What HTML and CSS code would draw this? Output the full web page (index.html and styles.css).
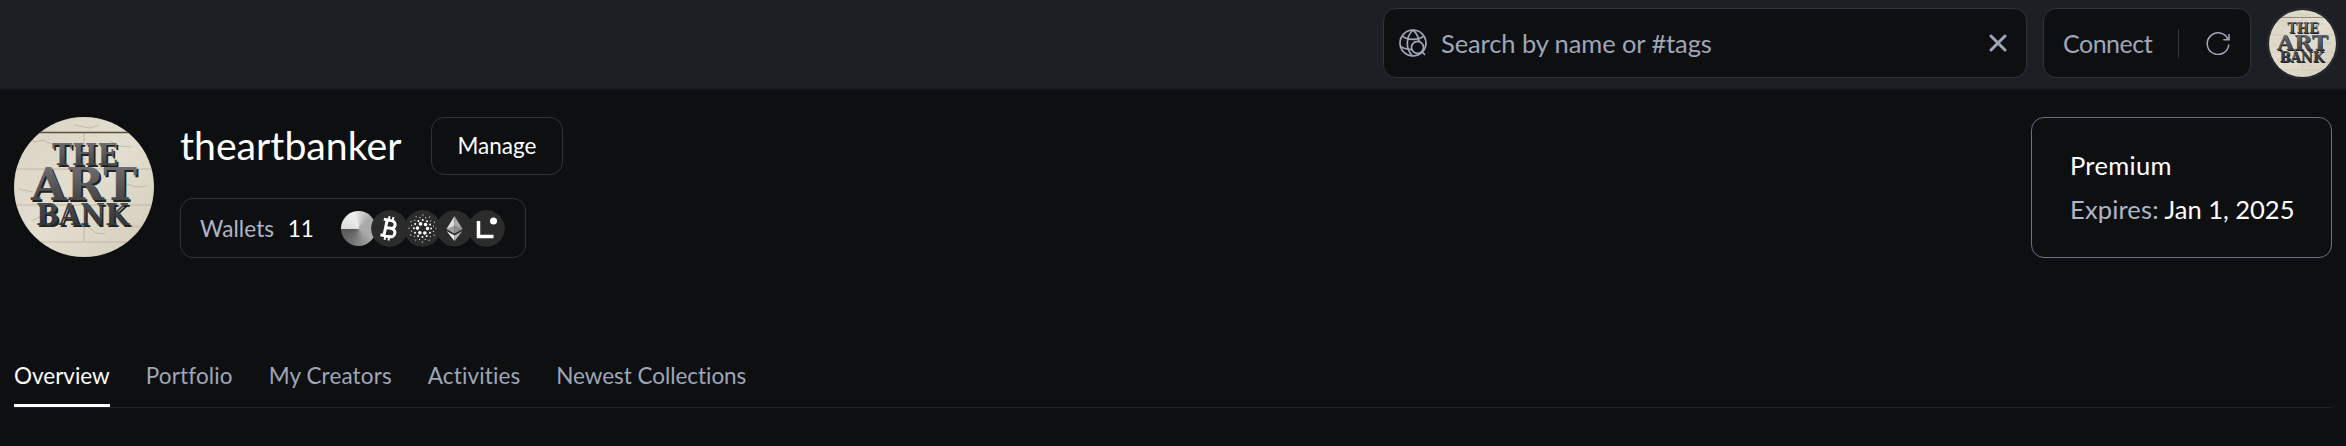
FILE: index.html
```html
<!DOCTYPE html>
<html lang="en">
<head>
<meta charset="utf-8">
<title>theartbanker</title>
<link rel="stylesheet" href="styles.css">
</head>
<body>
<svg class="defs" width="0" height="0" aria-hidden="true">
  <defs>
    <linearGradient id="stone" x1="0" y1="0" x2="1" y2="1"><stop offset="0" stop-color="#d9d3c4"/><stop offset=".5" stop-color="#e3decf"/><stop offset="1" stop-color="#d3ccba"/></linearGradient>
    <linearGradient id="metal" x1="0" y1="0" x2="0" y2="1"><stop offset="0" stop-color="#77777a"/><stop offset="1" stop-color="#39393b"/></linearGradient>
    <linearGradient id="metalDark" x1="0" y1="0" x2="0" y2="1"><stop offset="0" stop-color="#505154"/><stop offset="1" stop-color="#2c2d30"/></linearGradient>
    <clipPath id="round"><circle cx="70" cy="70" r="70"/></clipPath>
    <symbol id="bank" viewBox="0 0 140 140">
      <g clip-path="url(#round)">
        <rect width="140" height="140" fill="url(#stone)"/>
        <g fill="none" stroke="#b5ac98" stroke-width=".7">
          <path d="M0 52H140M0 88H140M0 125H140M70 15V52M70 88V125"/>
          <path d="M12 22l9 3 8-2 8 4M96 24l9 5 12 1M5 72l14 3M112 67l12 3 9-1M100 103l11 5 15 2M18 104l12-7M60 8l16 3 9-3M74 110l8 6 9 1"/>
        </g>
        <path d="M15 15.5H125" stroke="#57503f" stroke-width="1.3"/>
        <g class="lettering">
          <g fill="#202124" transform="translate(1.8 2)">
            <text x="38" y="47.500" font-size="29" textLength="66" lengthAdjust="spacingAndGlyphs">THE</text>
            <text x="17" y="83" font-size="44" textLength="106" lengthAdjust="spacingAndGlyphs">ART</text>
            <text x="22" y="108" font-size="29" textLength="93" lengthAdjust="spacingAndGlyphs">BANK</text>
          </g>
          <text x="38" y="47.500" font-size="29" fill="url(#metal)" textLength="66" lengthAdjust="spacingAndGlyphs">THE</text>
          <text x="17" y="83" font-size="44" fill="url(#metal)" textLength="106" lengthAdjust="spacingAndGlyphs">ART</text>
          <text x="22" y="108" font-size="29" fill="url(#metalDark)" textLength="93" lengthAdjust="spacingAndGlyphs">BANK</text>
        </g>
      </g>
    </symbol>
  </defs>
</svg>

<header class="topbar">
  <div class="search">
    <svg class="globe" viewBox="0 0 28 28" fill="none" stroke="currentColor" stroke-width="1.7">
      <circle cx="14" cy="14" r="13"/>
      <path d="M3.200 7.200C8 11.500 20 11.500 24.800 7.200M1.200 17.500C5 19.800 9 20.500 14 20.500M14 1C6.500 8 6.500 20 13.500 27M14 1C18.500 5 20.300 10 20 15"/>
      <circle cx="18.500" cy="18.300" r="6" fill="#0e0f11"/><path d="M22.700 22.500L26 25.800"/>
    </svg>
    <span class="placeholder">Search by name or #tags</span>
    <svg class="clear" viewBox="0 0 18 18" stroke="currentColor" stroke-width="3" stroke-linecap="round"><path d="M2 2L16 16M16 2L2 16"/></svg>
  </div>
  <div class="connect">
    <span class="connect-label">Connect</span>
    <span class="divider"></span>
    <svg class="refresh" viewBox="0 0 24 24" fill="none" stroke="currentColor" stroke-width="1.500"><path d="M22 8.500A10.800 10.800 0 1 0 22.800 13.500M23 3V8.800H17.300"/></svg>
  </div>
  <div class="user"><svg viewBox="0 0 140 140"><use href="#bank"/></svg></div>
</header>

<main class="profile">
  <section class="summary">
    <svg class="avatar" viewBox="0 0 140 140"><use href="#bank"/></svg>
    <div class="identity">
      <div class="name-row">
        <h1 class="name">theartbanker</h1>
        <button class="manage">Manage</button>
      </div>
      <div class="wallets">
        <span class="wallets-label">Wallets</span>
        <span class="wallets-count">11</span>
        <div class="coins">
          <span class="coin conic"></span>
          <svg class="coin" viewBox="0 0 37 37"><circle cx="18.500" cy="18.500" r="18.500" fill="#2b2b2b"/><g transform="rotate(12 18.500 18.500)" fill="none" stroke="#fff"><path d="M14.500 10V27M11 10.500H19.500a3.800 3.800 0 0 1 0 7.600H14.500M19.500 18.100H20.500a4.200 4.200 0 0 1 0 8.400H11" stroke-width="3"/><path d="M16 6.500V11M20 6.500V11M16 26V30.500M20 26V30.500" stroke-width="2"/></g></svg>
          <svg class="coin" viewBox="0 0 37 37"><circle cx="18.500" cy="18.500" r="18.500" fill="#2b2b2b"/><g fill="none" stroke="#fff" stroke-linecap="round"><circle cx="18.500" cy="18.500" r="5" stroke-width="3.600" stroke-dasharray="0 5.236"/><circle cx="18.500" cy="18.500" r="8.600" stroke-width="2" stroke-dasharray="0 4.503"/><circle cx="18.500" cy="18.500" r="11.300" stroke-width="1.300" stroke-dasharray="0 5.917" stroke-dashoffset="2.960" opacity=".8"/><circle cx="18.500" cy="18.500" r="13.500" stroke-width="1.400" stroke-dasharray="0 7.069" opacity=".7"/></g></svg>
          <svg class="coin" viewBox="0 0 37 37"><circle cx="18.500" cy="18.500" r="18" fill="#2b2b2b"/><path d="M18.500 6L10.500 19l8 4.500z" fill="#ddd"/><path d="M18.500 6l8 13-8 4.500z" fill="#aaa"/><path d="M10.500 19l8-3.500 8 3.500-8 4.500z" fill="#777" opacity=".6"/><path d="M10.500 21l8 4.600V31z" fill="#eee"/><path d="M26.500 21l-8 4.600V31z" fill="#b5b5b5"/></svg>
          <svg class="coin" viewBox="0 0 37 37"><circle cx="18.500" cy="18.500" r="18.500" fill="#2b2b2b"/><path d="M10.500 11V26.500H25.500" fill="none" stroke="#fff" stroke-width="3.500"/><circle cx="25.500" cy="11" r="3.500" fill="#fff"/></svg>
        </div>
      </div>
    </div>
    <aside class="plan">
      <div class="plan-name">Premium</div>
      <div class="plan-expiry"><span class="muted">Expires:</span> Jan 1, 2025</div>
    </aside>
  </section>
  <nav class="tabs">
    <a class="tab active">Overview</a>
    <a class="tab">Portfolio</a>
    <a class="tab">My Creators</a>
    <a class="tab">Activities</a>
    <a class="tab">Newest Collections</a>
  </nav>
</main>
</body>
</html>
```
FILE: styles.css
```css
* { box-sizing: border-box; }
body { margin: 0; height: 446px; overflow: hidden; background: #0e0f11; color: #fff; font-family: Lato, sans-serif; font-variant-ligatures: none; }
svg { display: block; flex: none; }
.defs { position: absolute; }
.lettering { font-family: "DejaVu Serif", serif; font-weight: 700; }

.topbar { height: 91px; padding: 8px 8px 0 0; display: flex; justify-content: flex-end; align-items: flex-start; background: linear-gradient(#1c1f24 0 88px, #0a0b0c 91px); color: #9ea6b8; }
.search { width: 644px; height: 70px; margin-right: 16px; padding: 0 19px 0 15px; display: flex; align-items: center; background: #0e0f11; border: 1px solid #303236; border-radius: 13px; font-size: 25.5px; letter-spacing: -0.1px; }
.globe { width: 28px; height: 28px; }
.placeholder { margin-left: 14px; flex: 1; }
.clear { width: 18px; height: 18px; }
.connect { width: 208px; height: 70px; margin-right: 16px; padding: 0 20px 0 19px; display: flex; align-items: center; background: #0e0f11; border: 1px solid #303236; border-radius: 13px; font-size: 25px; letter-spacing: -0.5px; }
.connect-label { width: 115px; }
.divider { width: 1px; height: 29px; margin-right: 27px; background: #34373d; }
.refresh { width: 24px; height: 24px; }
.user { width: 71px; height: 71px; display: grid; place-items: center; border: 1px solid #303238; border-radius: 50%; }
.user svg { width: 67px; height: 67px; }

.profile { padding: 26px 14px 0; }
.summary { display: flex; height: 141px; }
.avatar { width: 140px; height: 140px; }
.identity { margin-left: 26px; display: flex; flex-direction: column; gap: 23px; }
.name-row { display: flex; width: 383px; height: 58px; align-items: center; justify-content: space-between; }
.name { margin: 0; font-size: 39.200px; font-weight: 400; line-height: 56px; padding-bottom: 2px; }
.manage { width: 132px; height: 58px; padding: 0 0 1px; background: none; border: 1px solid #303236; border-radius: 13px; color: #fff; font: 22.500px Lato, sans-serif; }
.wallets { width: 346px; height: 60px; padding: 0 20px 0 19px; display: flex; align-items: center; border: 1px solid #303236; border-radius: 13px; font-size: 22.500px; }
.wallets-label { color: #aeb6c8; letter-spacing: 0.1px; }
.wallets-count { margin-left: 13.500px; }
.coins { margin-left: auto; display: flex; }
.coin { width: 37px; height: 37px; margin-left: -4.800px; border-radius: 50%; }
.coin.conic { width: 35px; height: 35px; margin-top: 1px; background: conic-gradient(from -90deg, #ddd, #eee 20%, #aaa 38%, #aaa 60%, #777 80%, #555); }
.plan { width: 301px; height: 141px; margin-left: auto; padding: 25px 0 0 38px; border: 1px solid #667184; border-radius: 13px; font-size: 25.500px; line-height: 44px; }
.plan-name { letter-spacing: 0.3px; }
.muted { color: #aeb6c8; letter-spacing: 0.150px; }

.tabs { display: flex; gap: 36px; height: 60px; margin-top: 90px; border-bottom: 1px solid #222427; font-size: 22.500px; color: #9ea6b8; letter-spacing: 0.130px; }
.tab { height: 59px; line-height: 56px; border-bottom: 3px solid transparent; }
.tab.active { color: #fff; border-color: #fff; letter-spacing: 0; }
.tab:last-child { letter-spacing: -0.050px; }
```
